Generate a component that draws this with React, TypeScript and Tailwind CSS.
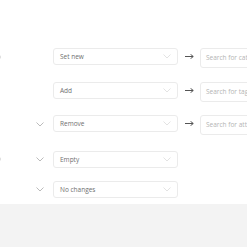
import React from "react";

const Chevron = ({ className = "" }: { className?: string }) => (
  <svg className={className} width="8" height="5" viewBox="0 0 8 5" fill="none">
    <path d="M0.5 0.5 L4 4 L7.5 0.5" stroke="currentColor" strokeWidth="0.8" />
  </svg>
);

const Select = ({ label }: { label: string }) => (
  <div className="w-[125px] h-[17px] shrink-0 border border-[#ebebeb] rounded-[3px] bg-white flex items-center pl-[6px] pr-[6px] justify-between">
    <span className="text-[6.5px] text-[#707070]">{label}</span>
    <Chevron className="text-[#dcdcdc]" />
  </div>
);

const Search = ({ ph }: { ph: string }) => (
  <div className="w-[80px] h-[20px] shrink-0 border border-[#ebebeb] rounded-[3px] bg-white flex items-center pl-[5px] overflow-hidden whitespace-nowrap">
    <span className="text-[6.5px] text-[#b4b4b4]">{ph}</span>
  </div>
);

const Arrow = () => (
  <svg width="9" height="5" viewBox="0 0 9 5" fill="none" className="text-[#555]">
    <path d="M0 2.5 H8" stroke="currentColor" strokeWidth="1" />
    <path d="M5.5 0.3 L8.3 2.5 L5.5 4.7" stroke="currentColor" strokeWidth="1" />
  </svg>
);

const ArrowCell = () => (
  <div className="w-[22px] h-[17px] shrink-0 flex items-center justify-center"><Arrow /></div>
);

export default function App() {
  return (
    <div className="w-[247px] h-[247px] overflow-hidden bg-[#f3f3f3]" style={{ fontFamily: "'Open Sans', sans-serif" }}>
      <div className="h-[204px] bg-white relative overflow-hidden">
        <div className="absolute left-[-3px] top-[55px] w-[4px] h-[4px] bg-[#ddd] rounded-full" />
        <div className="absolute left-[-3px] top-[157px] w-[4px] h-[4px] bg-[#ddd] rounded-full" />
        <div className="flex flex-col pl-[53px] pt-[48px] w-[330px]">
          <div className="flex items-start h-[20px]">
            <Select label="Set new" />
            <ArrowCell />
            <Search ph="Search for categories" />
          </div>
          <div className="flex items-start h-[20px] mt-[14px]">
            <Select label="Add" />
            <ArrowCell />
            <Search ph="Search for tags" />
          </div>
          <div className="flex items-start h-[20px] mt-[13px] relative">
            <Chevron className="absolute left-[-17px] top-[7px] text-[#aaa]" />
            <Select label="Remove" />
            <ArrowCell />
            <Search ph="Search for attributes" />
          </div>
          <div className="flex items-start h-[17px] mt-[16px] relative">
            <Chevron className="absolute left-[-17px] top-[6px] text-[#aaa]" />
            <Select label="Empty" />
          </div>
          <div className="flex items-start h-[17px] mt-[13px] relative">
            <Chevron className="absolute left-[-17px] top-[6px] text-[#aaa]" />
            <Select label="No changes" />
          </div>
        </div>
      </div>
    </div>
  );
}
